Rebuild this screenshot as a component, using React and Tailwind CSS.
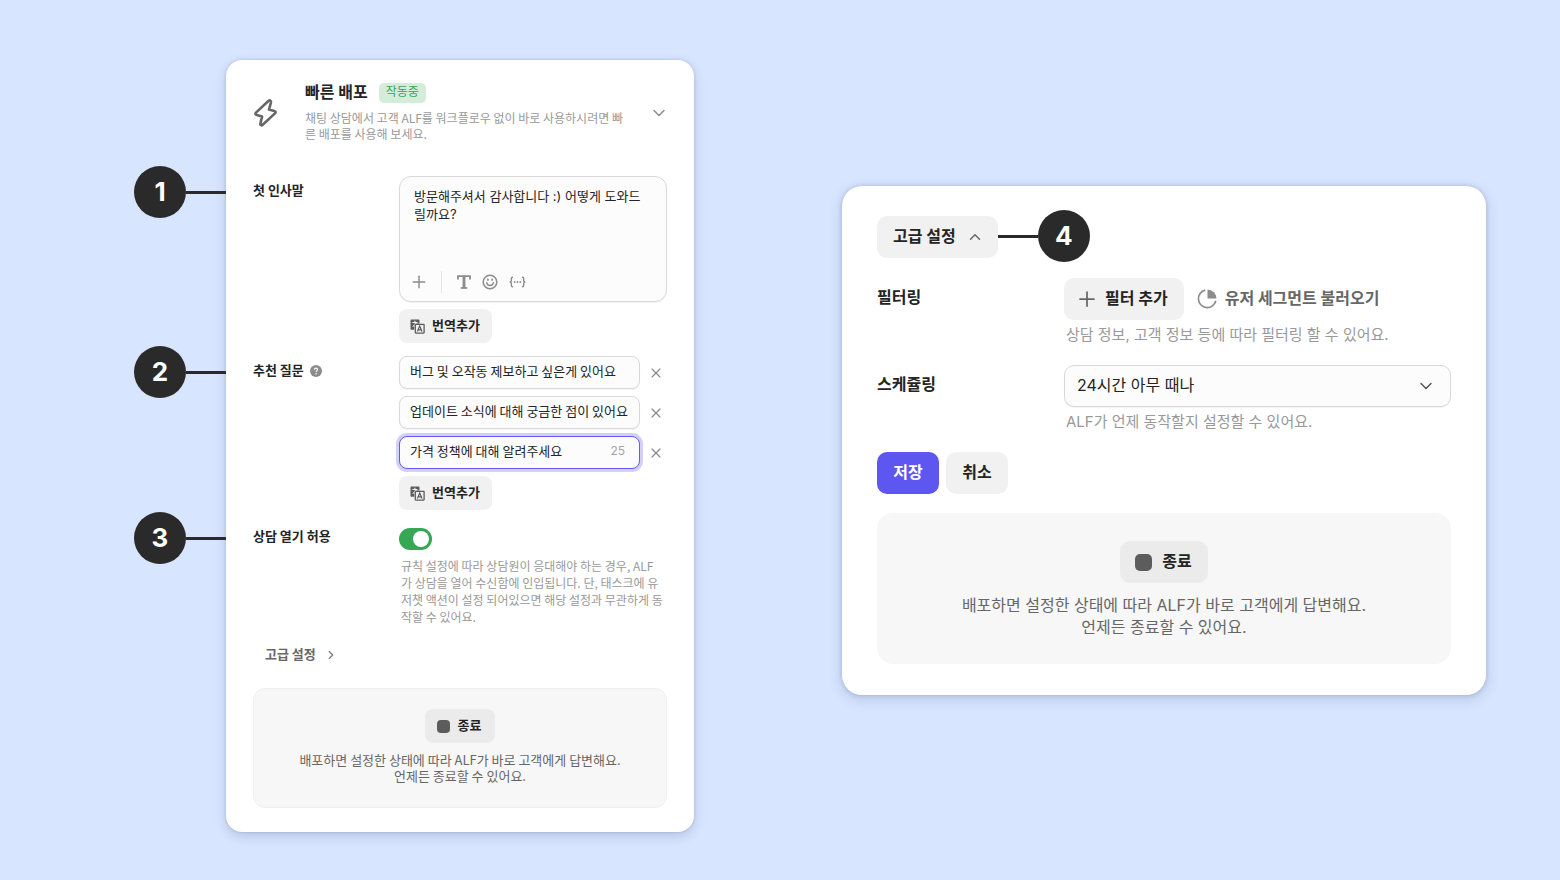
import React, { useState } from "react";
import { Plus, X, ChevronDown, ChevronUp, ChevronRight } from "lucide-react";

const KR = "font-['Noto_Sans_CJK_KR',sans-serif]";

function BoltIcon() {
  return (
    <svg width="24" height="30" viewBox="0 0 24 30" fill="none" stroke="#666" strokeWidth="2.6" strokeLinejoin="round" strokeLinecap="round" aria-hidden="true">
      <path d="M15.600 2.800 3 14.600c-1 1.200-.7 2.100.8 2.500l5.300 1.300-1.700 7.200c-.3 1.600 1.100 2.300 2.300 1.200L22 15.400c1-1.200.7-2.100-.8-2.500l-5.200-1.300 1.900-7c.4-1.700-1-2.800-2.300-1.800Z" />
    </svg>
  );
}

function TranslateIcon() {
  return (
    <svg width="15" height="15" viewBox="0 0 15 15" fill="none" aria-hidden="true">
      <path d="M1.500.4h7c.6 0 1 .4 1 1v3H5.400c-.7 0-1.200.5-1.200 1.200v5.200H1.500c-.6 0-1-.4-1-1V1.400c0-.6.4-1 1-1Z" fill="#5c5c5c" />
      <path d="M2.300 3.500h5.200M4.900 1.700v1.800M6.300 3.500c-.3.800-.6 1.200-1.100 1.700M2.600 7.600c.8-.3 1.300-.8 1.500-1.500" stroke="#f1f1f1" strokeWidth="1.100" />
      <rect x="5.300" y="5.300" width="8.800" height="8.800" rx=".5" fill="#f1f1f1" stroke="#5c5c5c" strokeWidth="1.300" />
      <path d="m7.400 12.400 2.300-5.400 2.300 5.400M8.200 10.800h3" stroke="#5c5c5c" strokeWidth="1.200" />
    </svg>
  );
}

function TextStyleIcon() {
  return (
    <svg width="14" height="14" viewBox="0 0 14 14" fill="none" stroke="#8c8c8c" aria-hidden="true">
      <path d="M1 4.400V1.100h12v3.300" strokeWidth="1.800" />
      <path d="M7 1v12" strokeWidth="2.800" />
      <path d="M3.700 13h6.600" strokeWidth="1.700" />
    </svg>
  );
}

function SmileIcon() {
  return (
    <svg width="16" height="16" viewBox="0 0 16 16" fill="none" stroke="#8c8c8c" strokeLinecap="round" aria-hidden="true">
      <circle cx="8" cy="8" r="6.800" strokeWidth="1.500" />
      <path d="M4.700 8.800c.5 1.900 1.600 2.700 3.300 2.700s2.800-.8 3.300-2.700" strokeWidth="1.400" />
      <path d="M5.900 5.300v.8M10.100 5.300v.8" strokeWidth="1.700" />
    </svg>
  );
}

function VariableIcon() {
  return (
    <svg width="17" height="12" viewBox="0 0 18 12" fill="none" stroke="#8c8c8c" strokeWidth="1.500" aria-hidden="true">
      <path d="M4.200 1H3.800C2.900 1 2.500 1.500 2.500 2.400v1.900C2.500 5.300 2 5.800.8 6c1.200.2 1.700.7 1.700 1.700v1.900c0 .9.400 1.400 1.300 1.400h.4" />
      <path d="M13.800 1h.4c.9 0 1.300.5 1.300 1.400v1.900c0 1 .5 1.500 1.700 1.700-1.200.2-1.700.7-1.700 1.700v1.900c0 .9-.4 1.400-1.300 1.400h-.4" />
      <g fill="#8c8c8c" stroke="none">
        <circle cx="6" cy="6" r="1" />
        <circle cx="9" cy="6" r="1" />
        <circle cx="12" cy="6" r="1" />
      </g>
    </svg>
  );
}

function HelpIcon() {
  return (
    <svg width="12" height="12" viewBox="0 0 12 12" fill="none" className="mt-0.5" aria-hidden="true">
      <circle cx="6" cy="6" r="6" fill="#8c8c8c" />
      <path d="M4.400 4.700c0-1 .7-1.600 1.600-1.600s1.600.6 1.600 1.400c0 1.100-1.500 1.200-1.500 2.500" stroke="#fff" strokeWidth="1.100" />
      <circle cx="6.100" cy="8.700" r=".75" fill="#fff" />
    </svg>
  );
}

function SegmentIcon() {
  return (
    <svg width="20" height="20" viewBox="0 0 20 20" fill="none" aria-hidden="true">
      <path d="M8.200 1.200a8.800 8.800 0 1 0 10.600 10.600" stroke="#8c8c8c" strokeWidth="1.700" />
      <path d="M10.500.5v9h9A9 9 0 0 0 10.500.5Z" fill="#8c8c8c" />
    </svg>
  );
}

function Circle({ children }) {
  return (
    <span className="flex size-13 items-center justify-center rounded-full bg-[#2a2a2a] text-[26px] leading-8 font-bold text-white">
      {children}
    </span>
  );
}

function FieldRow({ number, label, children, className = "" }) {
  return (
    <div className={`relative grid grid-cols-[146px_minmax(0,1fr)] ${className}`}>
      <div className="absolute -top-2.5 right-full mr-[27px] flex items-center">
        <Circle>{number}</Circle>
        <span className="h-[3px] w-10 bg-[#2a2a2a]" />
      </div>
      <div className={`flex items-center gap-1.5 self-start pt-1 text-[13px] leading-5 font-bold text-[#242424] ${KR}`}>{label}</div>
      <div>{children}</div>
    </div>
  );
}

function TranslateButton() {
  return (
    <button type="button" className={`flex h-[34px] items-center gap-[7px] rounded-lg bg-[#f1f1f1] pr-3 pl-[11px] text-[13px] leading-5 font-bold text-[#242424] ${KR}`}>
      <TranslateIcon />
      <span className="pb-[3px]">번역추가</span>
    </button>
  );
}

function Suggestion({ id, text, count }) {
  const [value, setValue] = useState(text);
  return (
    <div className="flex items-center gap-2">
      <div
        className={
          count
            ? "flex h-[33px] min-w-0 flex-1 items-center rounded-lg border border-[#6459f2] bg-[#fcfcfc] pr-3.5 pb-1 pl-2.5 ring-[3px] ring-[#d3cffb]"
            : "flex h-[33px] min-w-0 flex-1 items-center rounded-lg border border-[#d9d9d9] bg-[#fcfcfc] pb-1 pl-2.5 shadow-[0_1px_1px_rgba(0,0,0,0.05)]"
        }
      >
        <input
          id={id}
          aria-label="추천 질문"
          value={value}
          onChange={(e) => setValue(e.target.value)}
          className={`h-5 min-w-0 flex-1 bg-transparent text-[13px] leading-5 text-[#242424] outline-none ${KR}`}
        />
        {count && <span className="text-xs text-[#a3a3a3]">{count}</span>}
      </div>
      <button type="button" aria-label="삭제" className="mr-[3px] flex size-4 items-center justify-center text-[#8c8c8c]">
        <X className="size-4 shrink-0" strokeWidth={1.75} />
      </button>
    </div>
  );
}

function QuickDeployCard() {
  const [greeting, setGreeting] = useState("방문해주셔서 감사합니다 :) 어떻게 도와드릴까요?");
  const [open, setOpen] = useState(true);
  return (
    <section className="rounded-2xl bg-white px-[27px] pt-5 pb-6 shadow-[0_4px_12px_rgba(30,50,100,0.18),0_0_3px_rgba(30,50,100,0.2)]">
      <header className="flex items-center">
        <BoltIcon />
        <div className="ml-7 flex-1 pb-1">
          <div className="flex items-center gap-[11px]">
            <h2 className="text-base leading-6 font-bold text-[#242424]">빠른 배포</h2>
            <span className="mt-0.5 flex h-5 items-center rounded-[5px] bg-[#d4edda] px-[7px] pb-0.5 text-xs leading-4 text-[#34a853]">작동중</span>
          </div>
          <p className={`mt-1.5 text-xs leading-4 text-[#999] ${KR}`}>
            채팅 상담에서 고객 ALF를 워크플로우 없이 바로 사용하시려면 빠
            <br />
            른 배포를 사용해 보세요.
          </p>
        </div>
        <button type="button" aria-label="접기" className="-mr-0.5 text-[#8c8c8c]">
          <ChevronDown className="size-5" strokeWidth={1.75} />
        </button>
      </header>

      <FieldRow number="1" label={<label htmlFor="greeting">첫 인사말</label>} className="mt-[30px]">
        <div className="rounded-xl border border-[#d9d9d9] bg-[#fcfcfc] px-3.5 pt-2.5 shadow-[0_1px_1px_rgba(0,0,0,0.05)]">
          <textarea
            id="greeting"
            value={greeting}
            onChange={(e) => setGreeting(e.target.value)}
            className="block h-[76px] w-full resize-none overflow-hidden bg-transparent pr-1 text-[13px] leading-[18px] break-all text-[#242424] outline-none"
          />
          <div className="-ml-1 flex h-[38px] items-center text-[#8c8c8c]">
            <button type="button" aria-label="추가"><Plus className="-ml-[1px] size-5" strokeWidth={1.75} /></button>
            <span className="mr-[15px] ml-3 h-[22px] w-px bg-[#e6e6e6]" />
            <div className="flex items-center gap-[11px]">
              <button type="button" aria-label="글자 서식"><TextStyleIcon /></button>
              <button type="button" aria-label="이모지"><SmileIcon /></button>
              <button type="button" aria-label="변수"><VariableIcon /></button>
            </div>
          </div>
        </div>
        <div className="mt-[7px]"><TranslateButton /></div>
      </FieldRow>

      <FieldRow
        number="2"
        label={
          <>
            <label htmlFor="question-1">추천 질문</label>
            <HelpIcon />
          </>
        }
        className="mt-[13px]"
      >
        <div className="flex flex-col items-stretch gap-[7px]">
          <Suggestion id="question-1" text="버그 및 오작동 제보하고 싶은게 있어요" />
          <Suggestion id="question-2" text="업데이트 소식에 대해 궁금한 점이 있어요" />
          <Suggestion id="question-3" text="가격 정책에 대해 알려주세요" count="25" />
          <div className="flex"><TranslateButton /></div>
        </div>
      </FieldRow>

      <FieldRow number="3" label={<label htmlFor="allow-open">상담 열기 허용</label>} className="mt-3">
        <input
          id="allow-open"
          type="checkbox"
          role="switch"
          checked={open}
          onChange={(e) => setOpen(e.target.checked)}
          className="mt-1.5 flex h-[22px] w-[33px] appearance-none items-center rounded-full bg-[#c4c4c4] px-[3px] before:size-4 before:rounded-full before:bg-white checked:justify-end checked:bg-[#34a853]"
        />
        <p className={`mt-[7px] pl-0.5 text-xs leading-[17px] text-[#999] ${KR}`}>
          규칙 설정에 따라 상담원이 응대해야 하는 경우, ALF
          <br />
          가 상담을 열어 수신함에 인입됩니다. 단, 태스크에 유
          <br />
          저챗 액션이 설정 되어있으면 해당 설정과 무관하게 동
          <br />
          작할 수 있어요.
        </p>
      </FieldRow>

      <button type="button" className={`mt-3 flex h-[34px] items-center gap-2 pl-3 text-[13px] leading-5 font-bold text-[#666] ${KR}`}>
        고급 설정
        <ChevronRight className="mt-0.5 size-3.5 text-[#777]" strokeWidth={2} />
      </button>

      <div className="mt-[17px] flex flex-col items-center rounded-xl border border-[#efefef] bg-[#f7f7f7] pt-5 pb-[23px]">
        <button type="button" className={`flex h-[34px] items-center gap-2 rounded-lg bg-[#ebebeb] pr-3.5 pl-3 text-[13px] leading-5 font-bold text-[#242424] ${KR}`}>
          <span className="size-[13px] rounded bg-[#5c5c5c]" />
          <span className="pb-[3px]">종료</span>
        </button>
        <p className={`mt-[9px] text-center text-[13px] leading-4 text-[#666] ${KR}`}>
          배포하면 설정한 상태에 따라 ALF가 바로 고객에게 답변해요.
          <br />
          언제든 종료할 수 있어요.
        </p>
      </div>
    </section>
  );
}

function AdvancedCard() {
  return (
    <section className="mt-[126px] self-start rounded-[20px] bg-white px-[35px] pt-[30px] pb-[31px] text-base text-[#242424] shadow-[0_4px_14px_rgba(30,50,100,0.18),0_0_4px_rgba(30,50,100,0.2)]">
      <div className="relative w-fit">
        <button type="button" className="flex h-[42px] items-center gap-2.5 rounded-[10px] bg-[#f1f1f1] px-4 text-base leading-6 font-bold">
          <span className="pb-0.5">고급 설정</span>
          <ChevronUp className="-mr-0.5 size-[18px] text-[#666]" strokeWidth={2} />
        </button>
        <div className="absolute -top-1.5 left-full flex items-center">
          <span className="h-[3px] w-10 bg-[#2a2a2a]" />
          <Circle>4</Circle>
        </div>
      </div>

      <div className="mt-5 grid grid-cols-[187px_minmax(0,1fr)]">
        <div className="pt-[7px] leading-6 font-bold">필터링</div>
        <div>
          <div className="flex items-center gap-[13px]">
            <button type="button" className="flex h-[42px] items-center gap-1.5 rounded-[10px] bg-[#f1f1f1] pr-4 pl-[11px] leading-6 font-bold">
              <Plus className="size-6 text-[#666]" strokeWidth={1.75} />
              <span className="pb-0.5">필터 추가</span>
            </button>
            <button type="button" className="flex items-center gap-2 leading-6 font-bold text-[#666]">
              <SegmentIcon />
              <span className="pb-0.5">유저 세그먼트 불러오기</span>
            </button>
          </div>
          <p className="mt-1 pl-0.5 text-[15px] leading-[22px] text-[#999]">상담 정보, 고객 정보 등에 따라 필터링 할 수 있어요.</p>
        </div>
      </div>

      <div className="mt-[19px] grid grid-cols-[187px_minmax(0,1fr)]">
        <label htmlFor="schedule" className="pt-[7px] leading-6 font-bold">스케쥴링</label>
        <div>
          <div className="relative">
            <select id="schedule" className="block h-[42px] w-full appearance-none rounded-[10px] border border-[#d9d9d9] bg-[#fcfcfc] px-3 pb-0.5 text-base leading-6 text-[#242424] shadow-[0_1px_1px_rgba(0,0,0,0.05)]">
              <option>24시간 아무 때나</option>
            </select>
            <ChevronDown className="pointer-events-none absolute inset-y-0 right-[15px] my-auto size-5 text-[#555]" strokeWidth={1.75} />
          </div>
          <p className="mt-1 pl-0.5 text-[15px] leading-[22px] text-[#999]">ALF가 언제 동작할지 설정할 수 있어요.</p>
        </div>
      </div>

      <div className="mt-[19px] flex gap-[7px]">
        <button type="button" className="h-[42px] w-[62px] rounded-[10px] bg-[#5e56f0] pb-0.5 leading-6 font-bold text-white">저장</button>
        <button type="button" className="h-[42px] w-[62px] rounded-[10px] bg-[#f1f1f1] pb-0.5 leading-6 font-bold">취소</button>
      </div>

      <div className="mt-[19px] flex flex-col items-center rounded-2xl bg-[#f7f7f7] pt-7 pb-[26px]">
        <button type="button" className="flex h-[42px] items-center gap-2.5 rounded-[10px] bg-[#ebebeb] pr-4 pl-[15px] leading-6 font-bold">
          <span className="size-[17px] rounded-[5px] bg-[#5c5c5c]" />
          <span className="pb-0.5">종료</span>
        </button>
        <p className="mt-[11px] text-center leading-[22px] text-[#666]">
          배포하면 설정한 상태에 따라 ALF가 바로 고객에게 답변해요.
          <br />
          언제든 종료할 수 있어요.
        </p>
      </div>
    </section>
  );
}

export default function App() {
  return (
    <main className="grid min-h-screen grid-cols-[468fr_644fr] items-start gap-[148px] bg-[#d8e5ff] pt-15 pr-[74px] pb-12 pl-[226px] font-['Inter','Noto_Sans_CJK_KR',sans-serif]">
      <QuickDeployCard />
      <AdvancedCard />
    </main>
  );
}
